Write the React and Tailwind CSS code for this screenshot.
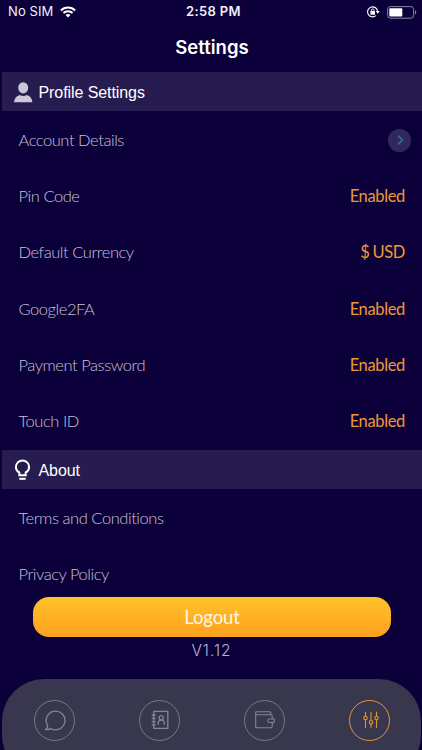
const profileRows = [
  { label: "Pin Code", value: "Enabled" },
  { label: "Default Currency", value: "$ USD" },
  { label: "Google2FA", value: "Enabled" },
  { label: "Payment Password", value: "Enabled" },
  { label: "Touch ID", value: "Enabled" },
]

function StatusBar() {
  return (
    <div className="grid h-6 shrink-0 grid-cols-3 items-center pl-2 pr-1 font-['Inter','Liberation_Sans',sans-serif] text-[13px] text-[#f1eff8]">
      <div className="flex items-center gap-[7px]">
        <span className="whitespace-nowrap tracking-[0.1px]">No SIM</span>
        <svg width="16" height="12" viewBox="0 0 16 12" fill="none" stroke="#fff" strokeWidth="2.1">
          <path d="M.9 4.4a10.2 10.2 0 0 1 14.2 0" />
          <path d="M3.4 7.1a6.6 6.6 0 0 1 9.2 0" />
          <path d="M8 11.6 5.5 9.1a3.6 3.6 0 0 1 5 0z" fill="#fff" stroke="none" />
        </svg>
      </div>
      <span className="pl-px text-center font-semibold tracking-[0.35px]">2:58 PM</span>
      <div className="flex items-center justify-end gap-[7px]">
        <svg width="13" height="12" viewBox="0 0 13 12" fill="none" stroke="#fff">
          <path d="M10.6 5.6A5 5 0 1 0 8.8 9.7" strokeWidth="1.1" />
          <path d="M8.7 5.1h4L10.7 7.7z" fill="#fff" stroke="none" />
          <rect x="3.4" y="5.1" width="4.6" height="3.6" rx=".5" fill="#fff" stroke="none" />
          <path d="M4.4 5.4V4.2a1.3 1.3 0 0 1 2.6 0v1.2" strokeWidth=".9" />
        </svg>
        <svg width="30" height="13" viewBox="0 0 30 13" fill="none" className="mr-px">
          <rect x=".6" y=".6" width="26" height="11.6" rx="2.8" stroke="#8b85a8" />
          <rect x="2.3" y="2.3" width="13" height="8.2" rx="1" fill="#fff" />
          <path d="M28 4.3c1.7.6 1.7 3.6 0 4.2z" fill="#8b85a8" />
        </svg>
      </div>
    </div>
  )
}

function SectionHeader({ icon, title }) {
  return (
    <div className="ml-[2px] flex h-[39px] shrink-0 items-center bg-[#261c4f] pl-3 pt-[2px] text-white">
      <div className="flex w-[24.5px] items-center">{icon}</div>
      <h2 className="font-['Liberation_Sans',sans-serif] text-base tracking-[-0.08px]">{title}</h2>
    </div>
  )
}

function Row({ label, children }) {
  return (
    <div className="flex h-[56.2px] shrink-0 items-center justify-between pl-[18.5px] pr-[17px] text-[16.5px]">
      <span className="font-light tracking-[-0.45px] text-[#c6c1d6]">{label}</span>
      {children}
    </div>
  )
}

function Tab({ active, children }) {
  return (
    <button
      className={
        active
          ? "flex size-[41px] items-center justify-center rounded-full border border-[#e2962f] text-[#e2962f]"
          : "flex size-[41px] items-center justify-center rounded-full border border-[#77768a] text-[#858496]"
      }
    >
      {children}
    </button>
  )
}

export default function App() {
  return (
    <div className="flex h-[750px] w-[422px] flex-col overflow-hidden bg-[#0c003b] font-['Lato',sans-serif]">
      <StatusBar />
      <h1 className="h-12 shrink-0 pl-[2px] text-center font-['Inter',sans-serif] text-[18.5px] font-semibold leading-[47px] text-white">
        Settings
      </h1>

      <SectionHeader
        title="Profile Settings"
        icon={
          <svg width="20" height="21" viewBox="0 0 20 21" fill="#cbc7d9" className="-mt-px">
            <ellipse cx="9.2" cy="5.8" rx="5" ry="5.6" />
            <path d="M0 20.3c.3-4 2.4-6.1 5.8-7.3 2.2 1.3 4.8 1.3 7 0 3.4 1.2 5.3 3.3 5.6 7.3z" />
          </svg>
        }
      />
      <div className="h-[339px] shrink-0 pt-[1.4px]">
        <Row label="Account Details">
          <span className="-mr-[6px] flex size-[23px] items-center justify-center rounded-full bg-[#30275c]">
            <svg width="7" height="10" viewBox="0 0 7 10" fill="none" stroke="#356c9f" strokeWidth="1.6" className="ml-px">
              <path d="M1 .6 5.4 5 1 9.4" />
            </svg>
          </span>
        </Row>
        {profileRows.map((row) => (
          <Row key={row.label} label={row.label}>
            <span className="tracking-[-0.35px] text-[#ec9a35] [word-spacing:-1px]">{row.value}</span>
          </Row>
        ))}
      </div>

      <SectionHeader
        title="About"
        icon={
          <svg width="17" height="22" viewBox="0 0 17 22" fill="none" stroke="#fff" strokeWidth="2" className="-mt-px">
            <path d="M5.3 16.2v-2.7C3.1 12.3 1.9 10.4 1.9 8a6.6 6.6 0 0 1 13.2 0c0 2.4-1.2 4.3-3.4 5.5v2.7z" />
            <path d="M5.3 19.8h6.4" />
          </svg>
        }
      />
      <div className="h-[108px] shrink-0 pt-[1px]">
        <Row label="Terms and Conditions" />
        <Row label="Privacy Policy" />
      </div>

      <button className="ml-[33px] mr-[31px] h-10 shrink-0 rounded-[16px] bg-linear-to-b from-[#ffc329] to-[#fd9f1f] pt-px text-[18.5px] tracking-[-0.15px] text-[#fff8e6]">
        Logout
      </button>
      <p className="h-[42px] shrink-0 pl-px text-center font-['Inter',sans-serif] text-[15.5px] font-light leading-[28px] tracking-[1px] text-[#b9b4cb]">
        V1.12
      </p>

      <nav className="ml-[2px] mr-px flex h-[98px] shrink-0 justify-between rounded-[42px] bg-[#38374e] pl-8 pr-[31px] pt-[20.5px]">
        <Tab>
          <svg width="22" height="22" viewBox="0 0 22 22" fill="none" stroke="currentColor" strokeWidth="1.3">
            <path d="M3.8 16.8A9.4 9.4 0 1 1 7 19.7c-1.6.8-3.6 1-5.4.6 1.4-.8 2.1-2 2.2-3.5z" />
          </svg>
        </Tab>
        <Tab>
          <svg width="18" height="20" viewBox="0 0 18 20" fill="none" stroke="currentColor" strokeWidth="1.3">
            <rect x="2.8" y="1.4" width="14" height="17" />
            <path d="M.6 5h4M.6 8.3h4M.6 11.6h4M.6 14.9h4" />
            <circle cx="10.2" cy="7.8" r="2.1" />
            <path d="M7.1 14.7v-1.3c0-2 1.2-3.2 3.1-3.2s3.1 1.2 3.1 3.2v1.3" />
          </svg>
        </Tab>
        <Tab>
          <svg width="20" height="18" viewBox="0 0 20 18" fill="none" stroke="currentColor" strokeWidth="1.1">
            <path d="M17.2 11.4v4.2c0 .8-.4 1.2-1.2 1.2H1.9c-.8 0-1.2-.4-1.2-1.2V1.8C.7 1 1.1.7 1.9.7h12.7c.8 0 1.2.4 1.2 1.2v1.8" />
            <path d="M.7 3.7H16c.8 0 1.2.4 1.2 1.2v3" />
            <path d="M19.2 8v3.5h-4.6a1.75 1.75 0 0 1 0-3.5z" />
          </svg>
        </Tab>
        <Tab active>
          <svg width="16" height="18" viewBox="0 0 16 18" fill="none" stroke="currentColor" strokeWidth="1.1" className="ml-[3px]">
            <path d="M2.5.8v4.5M2.5 8.7v8M8 .8v8.7M8 12.9v3.8M13.5.8v4.5M13.5 8.7v8" />
            <circle cx="2.5" cy="7" r="1.7" />
            <circle cx="8" cy="11.2" r="1.7" />
            <circle cx="13.5" cy="7" r="1.7" />
          </svg>
        </Tab>
      </nav>
    </div>
  )
}
